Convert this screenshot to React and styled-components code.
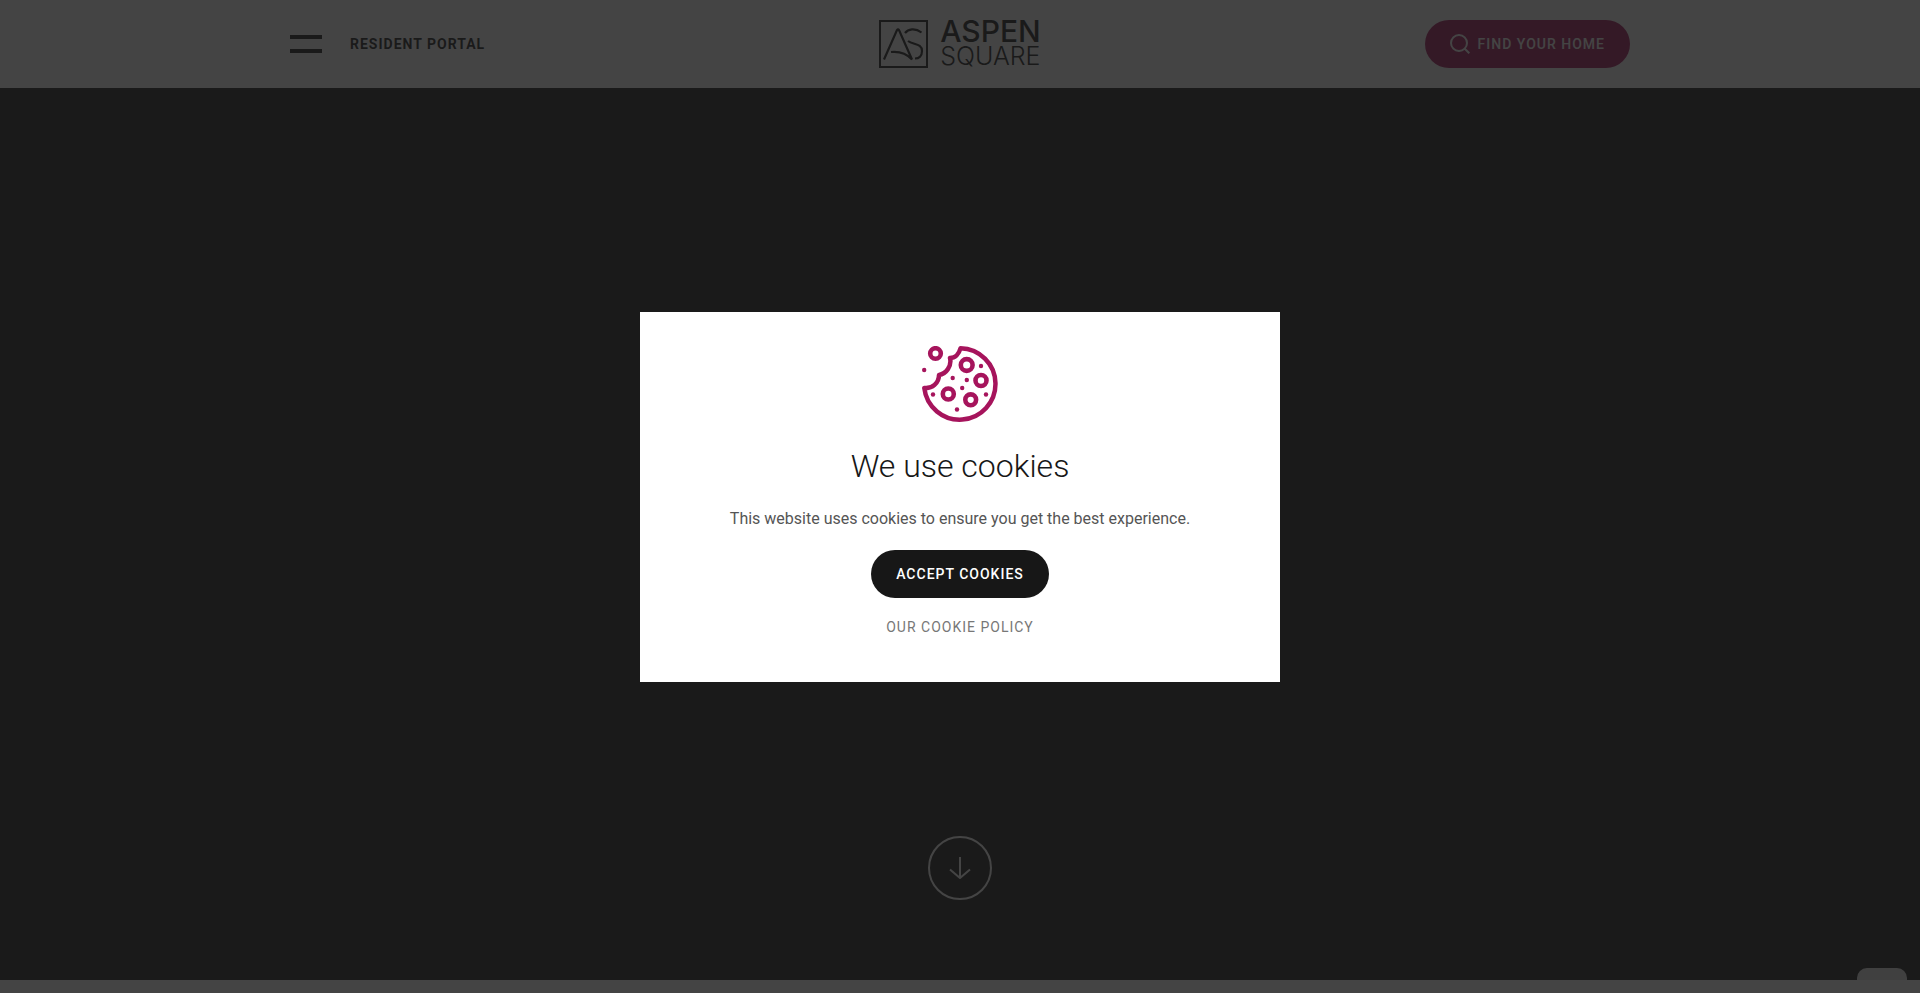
import React, { useState } from "react";
import styled, { createGlobalStyle } from "styled-components";

const GlobalStyle = createGlobalStyle`
  * {
    box-sizing: border-box;
  }

  body {
    margin: 0;
    background-color: #ffffff;
    color: #171717;
    font-family: Roboto, sans-serif;
    font-size: 16px;
    overflow: hidden;
  }
`;

const Page = styled.div`
  display: flex;
  flex-direction: column;
  min-height: 100vh;
`;

const Header = styled.header`
  padding: 20px;
  background-color: #ffffff;
`;

const HeaderInner = styled.div`
  display: grid;
  grid-template-columns: 1fr auto 1fr;
  align-items: center;
  max-width: 1340px;
  margin: 0 auto;
`;

const HeaderLeft = styled.nav`
  display: flex;
  align-items: center;
  gap: 28px;
`;

const MenuButton = styled.button`
  display: flex;
  flex-direction: column;
  gap: 10px;
  width: 32px;
  padding: 0;
  border: 0;
  background: none;
  cursor: pointer;
`;

const MenuBar = styled.span`
  height: 4px;
  background-color: #171717;
`;

const PortalLink = styled.a`
  color: #171717;
  font-size: 14px;
  font-weight: 700;
  line-height: 20px;
  letter-spacing: 1px;
  text-decoration: none;
  text-transform: uppercase;
`;

const LogoLink = styled.a`
  display: flex;
  align-items: center;
  gap: 12px;
  color: #171717;
  text-decoration: none;
`;

const LogoText = styled.span`
  display: flex;
  flex-direction: column;
  gap: 2px;
  font-family: Inter, sans-serif;
`;

const LogoWord = styled.span`
  font-size: ${({ $light }) => ($light ? "25px" : "30px")};
  font-weight: ${({ $light }) => ($light ? 300 : 500)};
  line-height: 23px;
`;

const PillButton = styled.button`
  display: inline-flex;
  align-items: center;
  gap: 8px;
  height: 48px;
  padding: 0 25px;
  border: 0;
  border-radius: 24px;
  background-color: ${({ $accent }) => ($accent ? "#a6145c" : "#171717")};
  color: #ffffff;
  font-family: inherit;
  font-size: 14px;
  font-weight: 500;
  letter-spacing: 1px;
  text-transform: uppercase;
  cursor: pointer;
`;

const FindButton = styled(PillButton)`
  justify-self: end;
`;

const Hero = styled.main`
  display: flex;
  flex: 1;
  align-items: flex-end;
  justify-content: center;
  padding-bottom: 80px;
  background-color: #1b1b1b;
`;

const ScrollButton = styled.button`
  display: flex;
  align-items: center;
  justify-content: center;
  width: 64px;
  height: 64px;
  padding: 0;
  border: 2px solid #ffffff;
  border-radius: 50%;
  background: none;
  color: #ffffff;
  cursor: pointer;
`;

const NextSection = styled.section`
  position: relative;
  z-index: 1;
  height: 13px;
  background-color: #ffffff;
`;

const ChatTab = styled.button`
  position: fixed;
  right: 13px;
  bottom: 0;
  width: 50px;
  height: 25px;
  border: 0;
  border-radius: 10px 10px 0 0;
  background-color: #e9e9e9;
`;

const Overlay = styled.div`
  position: fixed;
  inset: 0;
  z-index: 2;
  display: flex;
  align-items: center;
  justify-content: center;
  background-color: rgba(27, 27, 27, 0.82);
`;

const Modal = styled.div`
  display: flex;
  flex-direction: column;
  align-items: center;
  width: 640px;
  max-width: 100%;
  padding: 34px 32px 42px;
  background-color: #ffffff;
  text-align: center;
`;

const ModalTitle = styled.h2`
  margin: 24px 0 20px;
  font-size: 32px;
  font-weight: 300;
  line-height: 40px;
`;

const ModalText = styled.p`
  margin: 0 0 18px;
  color: #555555;
  line-height: 26px;
`;

const PolicyLink = styled.a`
  margin-top: 16px;
  color: #777777;
  font-size: 14px;
  line-height: 26px;
  letter-spacing: 1px;
  text-decoration: none;
  text-transform: uppercase;
`;

const LogoMark = () => (
  <svg width="49" height="48" viewBox="0 0 49 48" fill="none" stroke="currentColor" aria-hidden="true">
    <rect x="1" y="1" width="47" height="46" strokeWidth="2" />
    <path d="M5 39.5 L18 10 Q19 8.5 20 10 L33 39.5 C28 34 22 31 12 32" strokeWidth="2.2" />
    <path d="M42.5 12.5 C36 7.5 29 9 26 13 M29 21 C34 25 43 23 43 31 C43 36 40 38.5 36 38.5" strokeWidth="2.2" />
  </svg>
);

const SearchIcon = () => (
  <svg width="20" height="20" viewBox="0 0 20 20" fill="none" stroke="currentColor" strokeWidth="2" aria-hidden="true">
    <circle cx="9" cy="9" r="8" />
    <path d="M14.5 14.5 L19.3 19.3" />
  </svg>
);

const ArrowIcon = () => (
  <svg width="22" height="22" viewBox="0 0 22 22" fill="none" stroke="currentColor" strokeWidth="2" aria-hidden="true">
    <path d="M11 0 V21 M1 12.5 L11 21 L21 12.5" />
  </svg>
);

const CHIPS = [
  [13.5, 7.5, 5.3],
  [44.7, 19, 5.9],
  [59, 34.5, 5.5],
  [26.3, 48, 5.5],
  [48.7, 53.8, 5.4],
];

const CRUMBS = [
  [2.2, 24],
  [59, 20],
  [30.7, 32],
  [44.8, 34],
  [40.2, 42],
  [11, 48.5],
  [64, 48.5],
  [35, 63.5],
];

const CookieIcon = () => (
  <svg width="76" height="76" viewBox="0 0 76 76" fill="none" stroke="#a6145c" aria-hidden="true">
    <path
      d="M38.5 2.3 A35.7 35.7 0 1 1 2.3 42 C10 43 17 37 17 29 C24 28 30 20 28 12 C33 12 37 8 38.5 2.3 Z"
      strokeWidth="4.5"
      strokeLinejoin="round"
    />
    {CHIPS.map(([cx, cy, r]) => (
      <circle key={`${cx}-${cy}`} cx={cx} cy={cy} r={r} strokeWidth="4.6" />
    ))}
    {CRUMBS.map(([cx, cy]) => (
      <circle key={`${cx}-${cy}`} cx={cx} cy={cy} r="2.2" fill="#a6145c" stroke="none" />
    ))}
  </svg>
);

const App = () => {
  const [accepted, setAccepted] = useState(false);

  return (
    <>
      <GlobalStyle />
      <Page>
        <Header>
          <HeaderInner>
            <HeaderLeft>
              <MenuButton type="button" aria-label="Menu">
                <MenuBar />
                <MenuBar />
              </MenuButton>
              <PortalLink href="#portal">Resident Portal</PortalLink>
            </HeaderLeft>
            <LogoLink href="#home">
              <LogoMark />
              <LogoText>
                <LogoWord>ASPEN</LogoWord>
                <LogoWord $light>SQUARE</LogoWord>
              </LogoText>
            </LogoLink>
            <FindButton type="button" $accent>
              <SearchIcon />
              Find Your Home
            </FindButton>
          </HeaderInner>
        </Header>
        <Hero>
          <ScrollButton type="button" aria-label="Scroll down">
            <ArrowIcon />
          </ScrollButton>
        </Hero>
        <NextSection />
      </Page>
      <ChatTab type="button" aria-label="Open chat" />
      {!accepted && (
        <Overlay>
          <Modal role="dialog" aria-modal="true" aria-labelledby="cookie-title">
            <CookieIcon />
            <ModalTitle id="cookie-title">We use cookies</ModalTitle>
            <ModalText>
              This website uses cookies to ensure you get the best experience.
            </ModalText>
            <PillButton type="button" onClick={() => setAccepted(true)}>
              Accept Cookies
            </PillButton>
            <PolicyLink href="#cookie-policy">Our Cookie Policy</PolicyLink>
          </Modal>
        </Overlay>
      )}
    </>
  );
};

export default App;
